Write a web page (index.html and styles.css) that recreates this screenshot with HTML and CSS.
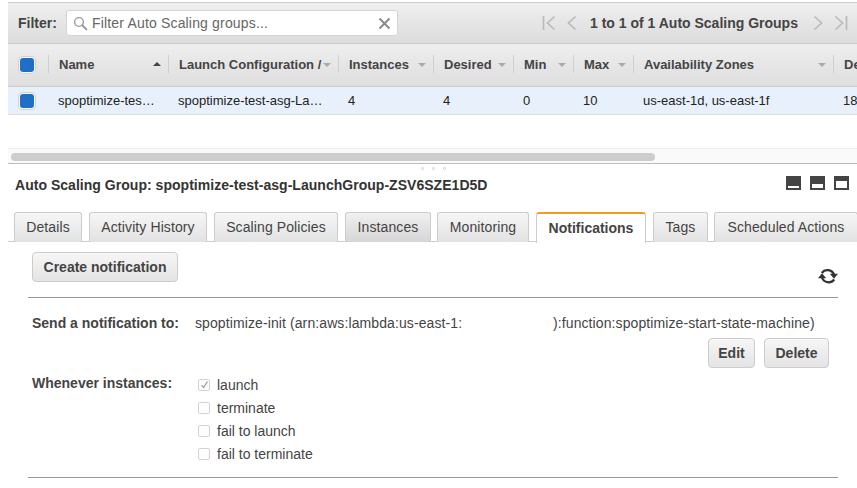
FILE: index.html
```html
<!DOCTYPE html>
<html lang="en">
<head>
<meta charset="utf-8">
<title>Auto Scaling Groups</title>
<link rel="stylesheet" href="styles.css">
</head>
<body>
<section class="grid-pane">
  <div class="toolbar">
    <span class="filter-label">Filter:</span>
    <div class="filter-input">
      <svg class="search-icon" width="15" height="15" viewBox="0 0 15 15"><circle cx="6" cy="6" r="4.4" fill="none" stroke="#999" stroke-width="1.4"/><path d="M9.2 9.2l4.2 4.2" stroke="#999" stroke-width="2" stroke-linecap="round"/></svg>
      <span class="placeholder">Filter Auto Scaling groups...</span>
      <svg class="clear-icon" width="13" height="13" viewBox="0 0 13 13"><path d="M1.5 1.5l10 10M11.5 1.5l-10 10" stroke="#8a8a8a" stroke-width="2"/></svg>
    </div>
    <div class="pager">
      <svg class="pg-first" width="14" height="16" viewBox="0 0 14 16"><path d="M1.5 1v14M12.500 1.500L5.500 8l7 6.500" fill="none" stroke="#bbb" stroke-width="1.700"/></svg>
      <svg class="pg-prev" width="10" height="16" viewBox="0 0 10 16"><path d="M8.500 1.500L1.500 8l7 6.500" fill="none" stroke="#bbb" stroke-width="1.700"/></svg>
      <span class="pager-text">1 to 1 of 1 Auto Scaling Groups</span>
      <svg class="pg-next" width="10" height="16" viewBox="0 0 10 16"><path d="M1.500 1.500L8.500 8l-7 6.500" fill="none" stroke="#bbb" stroke-width="1.700"/></svg>
      <svg class="pg-last" width="14" height="16" viewBox="0 0 14 16"><path d="M12.500 1v14M1.500 1.500L8.500 8l-7 6.500" fill="none" stroke="#bbb" stroke-width="1.700"/></svg>
    </div>
  </div>
  <div class="thead">
    <div class="th th-check"><span class="blue-check"><i></i></span></div>
    <div class="th c-name"><b>Name</b><span class="sort up"></span></div>
    <div class="th c-lc"><b>Launch Configuration /</b><span class="sort"></span></div>
    <div class="th c-inst"><b>Instances</b><span class="sort"></span></div>
    <div class="th c-des"><b>Desired</b><span class="sort"></span></div>
    <div class="th c-min"><b>Min</b><span class="sort"></span></div>
    <div class="th c-max"><b>Max</b><span class="sort"></span></div>
    <div class="th c-az"><b>Availability Zones</b><span class="sort"></span></div>
    <div class="th c-rest"><b>De</b></div>
  </div>
  <div class="tr">
    <div class="td td-check"><span class="blue-check"><i></i></span></div>
    <div class="td c-name">spoptimize-tes…</div>
    <div class="td c-lc">spoptimize-test-asg-La…</div>
    <div class="td c-inst">4</div>
    <div class="td c-des">4</div>
    <div class="td c-min">0</div>
    <div class="td c-max">10</div>
    <div class="td c-az">us-east-1d, us-east-1f</div>
    <div class="td c-rest">18</div>
  </div>
  <div class="hscroll"><div class="thumb"></div></div>
</section>
<div class="splitter"><i></i><i></i><i></i></div>
<section class="detail">
  <header class="detail-head">
    <h2>Auto Scaling Group: spoptimize-test-asg-LaunchGroup-ZSV6SZE1D5D</h2>
    <div class="pane-icons">
      <span class="pane pane-a"></span>
      <span class="pane pane-b"></span>
      <span class="pane pane-c"></span>
    </div>
  </header>
  <nav class="tabs">
    <span class="tab t1">Details</span>
    <span class="tab t2">Activity History</span>
    <span class="tab t3">Scaling Policies</span>
    <span class="tab t4 hover">Instances</span>
    <span class="tab t5">Monitoring</span>
    <span class="tab t6 active">Notifications</span>
    <span class="tab t7">Tags</span>
    <span class="tab t8">Scheduled Actions</span>
  </nav>
  <div class="content">
    <div class="actions">
      <button class="btn btn-create">Create notification</button>
      <svg class="refresh" width="20" height="18" viewBox="0 0 20 18"><path d="M3.800 6A7 7 0 0 1 16 7.500" fill="none" stroke="#333" stroke-width="2.200"/><path d="M11.800 6.800h8.200L16 11.800z" fill="#333"/><path d="M4 10.500A7 7 0 0 0 16.200 12.500" fill="none" stroke="#333" stroke-width="2.200"/><path d="M0 11.200h8.200L4 6.200z" fill="#333"/></svg>
    </div>
    <div class="notification">
      <div class="send-row">
        <span class="label">Send a notification to:</span>
        <span class="value v1">spoptimize-init (arn:aws:lambda:us-east-1:</span>
        <span class="value v2">):function:spoptimize-start-state-machine)</span>
      </div>
      <div class="row-actions">
        <button class="btn btn-edit">Edit</button>
        <button class="btn btn-delete">Delete</button>
      </div>
      <div class="when-row">
        <span class="label">Whenever instances:</span>
        <ul class="checks">
          <li><span class="cb"><svg width="9" height="9" viewBox="0 0 9 9"><path d="M1.500 5l2 2.500L7.500 1.500" fill="none" stroke="#999" stroke-width="1.200"/></svg></span>launch</li>
          <li><span class="cb"></span>terminate</li>
          <li><span class="cb"></span>fail to launch</li>
          <li><span class="cb"></span>fail to terminate</li>
        </ul>
      </div>
    </div>
  </div>
</section>
</body>
</html>
```
FILE: styles.css
```css
* { box-sizing: border-box; }
html, body { margin: 0; padding: 0; height: 488px; overflow: hidden; background: #fff; }
body { width: 857px; font: 14px/16px "Liberation Sans", Arial, sans-serif; color: #444; }

.grid-pane { margin: 2px 0 0 8px; }

.toolbar {
  height: 42px; display: flex; align-items: center; padding: 0 0 0 10px;
  background: linear-gradient(#efefef, #dcdcdc);
  border-top: 1px solid #ccc; border-bottom: 1px solid #ccc;
}
.filter-label { font-weight: 700; font-size: 14px; color: #444; width: 48px; }
.filter-input {
  width: 332px; height: 26px; display: flex; align-items: center; padding: 0 6px 0 6px;
  background: #fff; border: 1px solid #d4d4d4; border-radius: 3px;
}
.search-icon { flex: none; margin-right: 4px; }
.placeholder { flex: 1; color: #666; font-size: 14px; letter-spacing: .17px; }
.clear-icon { flex: none; margin-right: 0; }
.pager { display: flex; align-items: center; margin-left: 144px; }
.pg-first { margin-right: 11px; }
.pager-text { font-weight: 700; font-size: 14px; color: #444; margin: 0 15px 0 13px; white-space: nowrap; }
.pg-last { margin-left: 11px; }

.thead, .tr {
  display: grid;
  grid-template-columns: 40px 120px 170px 95px 80px 60px 60px 200px 24px;
}
.thead { height: 43px; background: linear-gradient(#eeeeee, #dedede); border-bottom: 1px solid #ccc; }
.tr { height: 28px; background: #e8f1fb; border-bottom: 1px solid #d8dde3; }
.th { position: relative; display: flex; align-items: center; padding-left: 11px; white-space: nowrap; overflow: hidden; font-size: 13px; color: #444; }
.th b { font-weight: 700; }
.th + .th::before {
  content: ""; position: absolute; left: 0; top: 11px; height: 18px; width: 1px; background: #cfcfcf;
}
.th-check, .td-check { padding-left: 10px; display: flex; align-items: center; }
.td-check { padding-left: 11px; }
.td { display: flex; align-items: center; padding-left: 10px; white-space: nowrap; overflow: hidden; font-size: 13px; color: #222; }
.blue-check {
  width: 18px; height: 18px; display: flex; align-items: center; justify-content: center;
  background: #f7f7f7; border: 1px solid #d2d2d2; border-radius: 4px;
}
.blue-check i { width: 14px; height: 14px; background: #1f6fc6; border-radius: 3px; }
.sort {
  position: absolute; right: 7px; top: 19px; width: 0; height: 0;
  border-left: 4px solid transparent; border-right: 4px solid transparent;
  border-top: 4px solid #aaa;
}
.sort.up { border-top: 0; border-bottom: 4px solid #444; top: 18px; }

.hscroll {
  margin-top: 33px; height: 16px; padding: 4px 0 0 3px;
  border-top: 1px solid #eee; border-bottom: 1px solid #bbb; background: #fafafa;
}
.thumb { width: 644px; height: 8px; background: #cdcdcd; border-radius: 4px; }

.splitter { height: 9px; display: flex; justify-content: center; align-items: center; gap: 8px; padding: 0 0 0 9px; }
.splitter i { width: 3px; height: 3px; border: 1px solid #ccc; border-radius: 50%; }

.detail-head { height: 22px; display: flex; align-items: center; justify-content: space-between; padding: 1px 8px 0 15px; }
.detail-head h2 { margin: 0; font-size: 14px; font-weight: 700; color: #333; letter-spacing: .03px; }
.pane-icons { display: flex; gap: 9px; margin-top: -3px; }
.pane { width: 15px; height: 14px; background: #444; display: flex; align-items: flex-end; padding: 2px; }
.pane::after { content: ""; display: block; width: 100%; background: #fff; }
.pane-a::after { height: 2px; }
.pane-b::after { height: 4px; }
.pane-c::after { height: 7px; }

.tabs { margin: 17px 0 0 8px; height: 30px; padding-left: 6px; display: flex; gap: 7px; border-bottom: 1px solid #ccc; white-space: nowrap; }
.tab {
  height: 30px; flex: none; display: flex; align-items: center; justify-content: center; padding-bottom: 1px;
  font-size: 14px; color: #444; letter-spacing: .1px;
  background: linear-gradient(#f6f6f6, #e2e2e2);
  border: 1px solid #ccc; border-bottom: 0; border-radius: 3px 3px 0 0;
}
.t1 { width: 68px; }
.t2 { width: 118px; }
.t3 { width: 124px; }
.t4 { width: 86px; }
.t5 { width: 92px; margin-left: -1px; }
.t6 { width: 110px; }
.t7 { width: 55px; }
.t8 { width: 144px; margin-left: -1px; }
.tab.hover { background: linear-gradient(#f0f0f0, #d6d6d6); }
.tab.active { background: #fff; border-top: 2px solid #f79a22; font-weight: 700; height: 31px; color: #444; letter-spacing: 0; }

.content { margin: 0 19px 0 28px; }
.actions { height: 56px; border-bottom: 1px solid #999; position: relative; display: flex; justify-content: space-between; padding: 10px 0 0 4px; }
.btn {
  font: 700 14px/16px "Liberation Sans", Arial, sans-serif; color: #444; height: 30px; padding: 0;
  background: linear-gradient(#f6f6f6, #e4e4e4);
  border: 1px solid #ccc; border-radius: 4px;
}
.btn-create { width: 146px; }
.refresh { margin-top: 15px; }
.notification { height: 180px; border-bottom: 1px solid #999; padding: 17px 0 0 4px; font-size: 14px; }
.send-row { display: flex; height: 16px; white-space: nowrap; font-size: 14px; letter-spacing: .1px; }
.label { font-weight: 700; font-size: 14px; color: #444; width: 163px; flex: none; letter-spacing: 0; }
.value { color: #444; }
.v1 { width: 358px; flex: none; }
.row-actions { display: flex; justify-content: flex-end; gap: 9px; margin-top: 7px; padding-right: 9px; }
.btn-edit { width: 47px; }
.btn-delete { width: 65px; }
.when-row { display: flex; margin-top: 6px; height: 90px; }
.when-row .label { margin-top: 1px; width: 166px; }
.checks { list-style: none; margin: -1px 0 0; padding: 0; }
.checks li { height: 23px; display: flex; align-items: center; font-size: 14px; color: #444; }
.cb { width: 12px; height: 12px; margin-right: 7px; border: 1px solid #d4d4d4; border-radius: 2px; display: flex; align-items: center; justify-content: center; background: #fdfdfd; }
```
